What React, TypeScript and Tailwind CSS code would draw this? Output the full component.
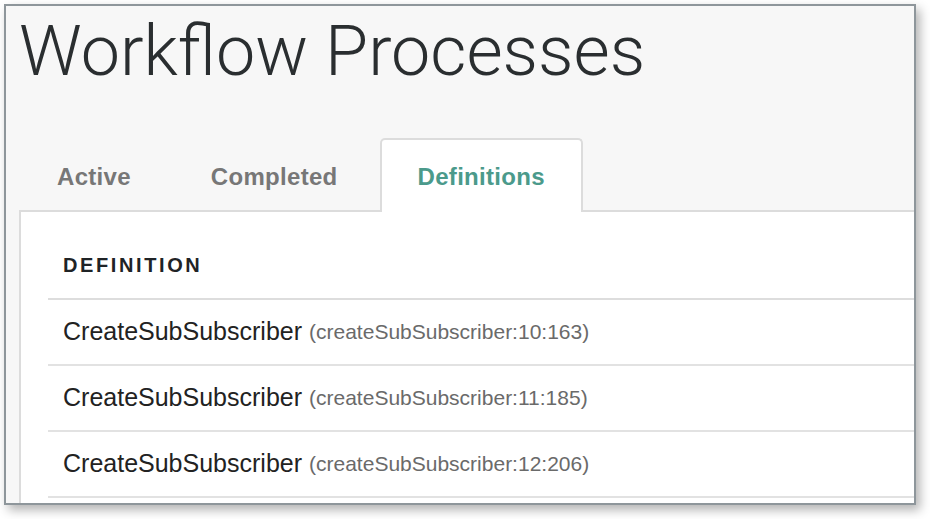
const rows = [
  { name: "CreateSubSubscriber", id: "createSubSubscriber:10:163" },
  { name: "CreateSubSubscriber", id: "createSubSubscriber:11:185" },
  { name: "CreateSubSubscriber", id: "createSubSubscriber:12:206" },
];

const tabs = ["Active", "Completed", "Definitions"];

export default function App() {
  return (
    <div className="w-[930px] h-[519px] bg-white pt-[4px] pl-[4px] font-['Liberation_Sans',Arial,sans-serif]">
      <div className="w-[912px] h-[501px] border-2 border-[#8e969b] bg-[#f7f7f7] overflow-hidden flex flex-col shadow-[4px_5px_10px_rgba(0,0,0,0.3)]">
        {/* Title */}
        <h1 className="pl-[13px] pt-[5px] h-[132px] text-[70px] leading-[80px] font-light text-[#2a2e30] font-['Roboto',sans-serif]">
          Workflow Processes
        </h1>

        {/* Tabs */}
        <div className="flex items-end ml-[13px] gap-[4px]">
          {tabs.map((t) => {
            const active = t === "Definitions";
            return (
              <div
                key={t}
                className={
                  active
                    ? "relative z-10 -mb-[2px] h-[74px] px-[36px] pt-[2px] flex items-center bg-white border-2 border-b-0 border-[#dcdcdc] rounded-t-[5px] text-[24px] tracking-[0.3px] font-bold text-[#4b9a8b]"
                    : "-mb-[2px] h-[74px] px-[36px] pt-[2px] flex items-center border-2 border-b-0 border-transparent text-[24px] tracking-[0.3px] font-bold text-[#777777]"
                }
              >
                {t}
              </div>
            );
          })}
        </div>

        {/* Panel */}
        <div className="flex-1 ml-[13px] bg-white border-l-2 border-t-2 border-[#dcdcdc] pl-[27px]">
          <div className="h-[88px] border-b-2 border-[#dddddd] pl-[15px] pt-[20px] flex items-center">
            <span className="text-[20px] font-bold tracking-[2.6px] text-[#1f2326]">DEFINITION</span>
          </div>
          {rows.map((r) => (
            <div key={r.id} className="h-[66px] border-b-2 border-[#e2e2e2] pl-[15px] flex items-center">
              <span className="text-[25px] text-[#222222]">{r.name}</span>
              <span className="ml-[7px] text-[21px] text-[#6a6a6a]">({r.id})</span>
            </div>
          ))}
        </div>
      </div>
    </div>
  );
}
